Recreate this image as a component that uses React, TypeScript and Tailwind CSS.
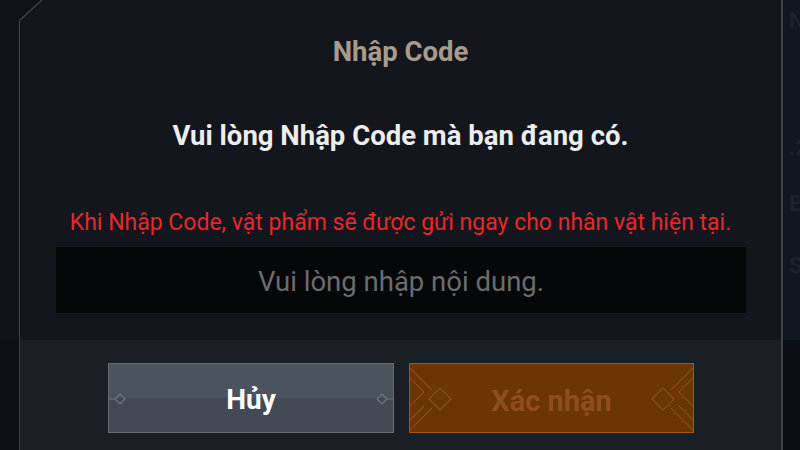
import React from 'react';

const CancelOrnament: React.FC<{ flip?: boolean }> = ({ flip }) => (
  <svg
    width="18"
    height="12"
    viewBox="0 0 18 12"
    className={`absolute top-[29px] ${flip ? 'right-0 -scale-x-100' : 'left-0'}`}
  >
    <path d="M0 6 H6 M6 6 L11 1 L16 6 L11 11 Z" fill="none" stroke="#6f7782" strokeWidth="1.2" />
  </svg>
);

const ConfirmOrnament: React.FC<{ flip?: boolean }> = ({ flip }) => (
  <svg
    width="44"
    height="70"
    viewBox="0 0 44 70"
    className={`absolute top-0 ${flip ? 'right-0 -scale-x-100' : 'left-0'}`}
  >
    <g fill="none" stroke="#a2661c" strokeWidth="1" opacity="0.75">
      <path d="M0 4 L22 26 M0 14 L14 28 L0 42" />
      <path d="M0 66 L22 44 M0 56 L14 42" />
      <path d="M30 24 L41 35 L30 46 L19 35 Z" />
    </g>
  </svg>
);

export default function App() {
  return (
    <div className="w-[800px] h-[450px] bg-[#0d1218] flex overflow-hidden font-['Roboto','Noto_Sans',sans-serif]">
      {/* left backdrop strip */}
      <div className="w-[19px] flex flex-col">
        <div className="h-[340px] bg-[#0f141b]" />
        <div className="flex-1 bg-[#0c1016]" />
      </div>

      {/* dialog */}
      <div className="relative w-[764px] flex flex-col border-l border-r-2 border-[#3c434c]">
        <svg width="26" height="22" viewBox="0 0 26 22" className="absolute -left-px top-0">
          <path d="M0 0 H23 L0 21 Z" fill="#0f141b" />
          <path d="M23 0 L0.5 20.5" stroke="#3f464f" strokeWidth="1.3" fill="none" />
        </svg>

        <div className="h-[340px] bg-[#13161d] flex flex-col items-center">
          <h1 className="mt-[35px] text-[27.5px] leading-[34px] font-bold text-[#a89b8c]">Nhập Code</h1>
          <p className="mt-[50px] text-[27.5px] leading-[34px] font-bold text-[#ecedef]">
            Vui lòng Nhập Code mà bạn đang có.
          </p>
          <p className="mt-[55px] text-[23px] leading-[30px] text-[#e8272c]">
            Khi Nhập Code, vật phẩm sẽ được gửi ngay cho nhân vật hiện tại.
          </p>
          <div className="mt-[9px] ml-[1px] w-[690px] h-[66px] bg-[#060708] flex items-center justify-center pt-[4px]">
            <span className="text-[27.5px] leading-none text-[#6b6c6e]">Vui lòng nhập nội dung.</span>
          </div>
        </div>

        <div className="flex-1 bg-[#1a1e25] flex justify-center gap-[15px] pt-[23px] pl-[1px]">
          <button className="relative w-[286px] h-[70px] border border-[#646b75] bg-[linear-gradient(#4b535e_0%,#4b535e_50%,#434a55_50%,#434a55_100%)] flex items-center justify-center pt-[3px]">
            <CancelOrnament />
            <CancelOrnament flip />
            <span className="text-[28px] leading-none font-bold text-white">Hủy</span>
          </button>
          <button className="relative w-[285px] h-[70px] border border-[#9b5c12] bg-[#6b3504] flex items-center justify-center pt-[6px]">
            <ConfirmOrnament />
            <ConfirmOrnament flip />
            <span className="text-[29px] leading-none font-bold text-[#8e4d1c]">Xác nhận</span>
          </button>
        </div>
      </div>

      {/* right backdrop strip */}
      <div className="flex-1 flex flex-col overflow-hidden">
        <div className="h-[340px] bg-[#111720] flex flex-col pl-[6px] text-[22px] font-bold text-[#1c222b] leading-none">
          <span className="mt-[10px]">N</span>
          <span className="mt-[105px]">.2</span>
          <span className="mt-[34px]">E</span>
          <span className="mt-[40px]">S</span>
        </div>
        <div className="flex-1 bg-[#0b0f15]" />
      </div>
    </div>
  );
}
